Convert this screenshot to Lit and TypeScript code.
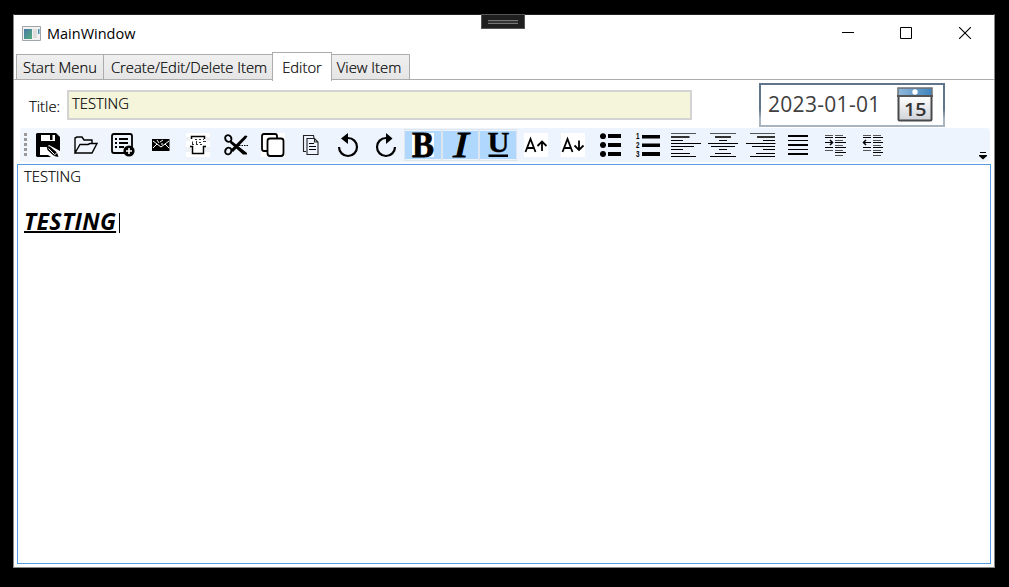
import { LitElement, html, css, svg } from "lit";
import { customElement } from "lit/decorators.js";
import { classMap } from "lit/directives/class-map.js";

type Seg = [number, number, number, number?, string?];
// Horizontal strokes: x start, x end, y, thickness, colour
const bars = (rows: Seg[]) =>
  rows.map(([a, b, y, h = 1, c = "#000"]) => svg`<rect x=${a} y=${y} width=${b - a} height=${h} fill=${c} />`);

const G = "#555";
interface Tool { name: string; w: number; on?: boolean; art: unknown }

const tools: Tool[] = [
  { name: "Save", w: 24, art: svg`
    <path d="M1 0H20L24 4V23L23 24H1L0 23V1Z"/>
    <path fill="#fff" d="M5 2H19V8H5ZM4 14H11L13 12L24 18V24H15L12 22H4Z"/>
    <path d="M14 2H16.500V7H14ZM10.500 13L14 13.500L21 19.500L22.500 24L18 23L11.500 17Z"/>
    <path stroke="#fff" stroke-width="1" fill="none" d="M12.500 15.500L18.500 21.500M18 22.500L21.500 19"/>` },
  { name: "Open", w: 24, art: svg`
    <path fill="none" stroke="#000" stroke-width="1.4" d="M1 20V5L3 4H8L10 7H18V11M1 20L6 11.5H14L16 10.5H23L18 20Z"/>` },
  { name: "New", w: 24, art: svg`
    <path fill="none" stroke="#000" stroke-width="1.8" d="M14 20H3Q1 20 1 18V3Q1 1 3 1H19Q21 1 21 3V14"/>
    ${bars([[4, 6, 5, 2], [8, 17, 5, 2], [4, 6, 9, 2], [8, 17, 9, 2], [4, 6, 13, 2], [8, 13, 13, 2]])}
    <circle cx="18" cy="18" r="5.6"/><path stroke="#fff" stroke-width="1.6" d="M15 18H21M18 15V21"/>` },
  { name: "Mail", w: 24, art: svg`
    <path d="M3 6H20.500V18H3Z"/>
    <path fill="none" stroke="#fff" stroke-width="1" d="M4 8L8 11L4 15M20 8L16 11L20 15M8 11L12 14L16 11M8 7L10 10M11 9L14 7M12 11H14"/>` },
  { name: "Print", w: 24, art: svg`
    <path fill="#fff" d="M0 0H24V24H0Z"/><path fill="#edf1f5" d="M0 4H4V8H0ZM20 4H24V8H20ZM0 14H5V19H0ZM19 14H24V19H19Z"/>
    <path fill="none" stroke="#000" stroke-width="1.500" d="M5.500 6V3.500H18.500V6M6.500 13V20.500H17.500V13M4 13.500H7M17 13.500H20"/>
    <path fill="none" stroke="#333" stroke-width="1" stroke-dasharray="2 2" d="M9 6.500H18M6 11.500H18"/>
    <path fill="none" stroke="#333" stroke-width="1" d="M6.500 8.500V11M10.500 8V11M13 9.500H15M17 8.500H20"/>` },
  { name: "Cut", w: 24, art: svg`
    <g fill="none" stroke="#000" stroke-width="1.900"><ellipse cx="4.300" cy="5.500" rx="3" ry="3.500" transform="rotate(-30 4.300 5.500)"/>
    <ellipse cx="4.300" cy="18" rx="3" ry="3.500" transform="rotate(30 4.300 18)"/></g>
    <path d="M6.500 7L23 20L23 21.500H19L6 10ZM6.500 17L21 2.500L23.500 3L22 5.500L9 19Z"/>
    <path stroke="#000" stroke-width="1" stroke-dasharray="1.500 1" d="M15 12.500H24"/>` },
  { name: "Copy", w: 24, art: svg`
    <path fill="#fff" d="M0 0H24V24H0Z"/>
    <g fill="#fff" stroke="#000" stroke-width="1.800"><path d="M3 1H14Q16 1 16 3V17Q16 18 15 18H3Q1 18 1 16V3Q1 1 3 1Z"/>
    <path d="M9 5.500H20Q22.500 5.500 22.500 8V20Q22.500 23 20 23H9Q6.500 23 6.500 20V8Q6.500 5.500 9 5.500Z"/></g>` },
  { name: "Paste", w: 24, art: svg`
    <path fill="none" stroke="#222" stroke-width="1.100" d="M7 18.500H4.500V2.500H14.500L15 5M8 5.500H15.500L19 9V21.500H8ZM15.500 5.500V9H19"/>
    ${bars([[10, 15, 10], [10, 17, 13, 1], [10, 17, 16]])}` },
  { name: "Undo", w: 24, art: svg`
    <path fill="none" stroke="#000" stroke-width="2.200" d="M3 14A9 9 0 1 0 12 5H10"/><path d="M5 5.500L12 0V11Z"/>` },
  { name: "Redo", w: 24, art: svg`
    <path fill="none" stroke="#000" stroke-width="2.200" d="M21 14A9 9 0 1 1 12 5H14"/><path d="M18.500 5.500L12 0V11Z"/>` },
  { name: "Bold", w: 24, on: true, art: svg`
    <path fill="#fff" d="M1 0H23V24H1Z"/>
    <text class="serif" x="1" y="23.600" font-size="35.500" textLength="22" lengthAdjust="spacingAndGlyphs" stroke="#000" stroke-width=".8">B</text>` },
  { name: "Italic", w: 24, on: true, art: svg`
    <text class="serif slant" x="4" y="23.500" font-size="35.500" textLength="15.500" lengthAdjust="spacingAndGlyphs" stroke="#000" stroke-width=".8">I</text>` },
  { name: "Underline", w: 24, on: true, art: svg`
    <text class="serif" x="1.500" y="19" font-size="29.500" textLength="22" lengthAdjust="spacingAndGlyphs" stroke="#000" stroke-width=".4">U</text>
    <path d="M2.500 21.500H22V24H2.500Z"/>` },
  { name: "Grow", w: 24, art: svg`
    <path fill="#fff" d="M0 0H24V24H0Z"/>
    <path fill="none" stroke="#000" stroke-width="1.800" d="M1.500 19L6.500 6L11.500 19M3.500 15H9.500M18 18V8.500M13.500 13L18 8.500L22.500 13"/>` },
  { name: "Shrink", w: 24, art: svg`
    <path fill="#fff" d="M0 0H24V24H0Z"/>
    <path fill="none" stroke="#000" stroke-width="1.800" d="M1.500 19L6.500 6L11.500 19M3.500 15H9.500M18 7.500V17M13.500 12.500L18 17L22.500 12.500"/>` },
  { name: "Bullets", w: 24, art: svg`
    <circle cx="4" cy="3.200" r="2.900"/><circle cx="4" cy="12" r="2.900"/><circle cx="4" cy="21" r="2.900"/>
    ${bars([[1, 7, 2.400, 1.600], [1, 7, 11.200, 1.600], [1, 7, 20.200, 1.600], [9, 22, 1, 4], [9, 22, 10, 4], [9, 22, 19, 4]])}` },
  { name: "Numbering", w: 24, art: svg`
    ${["1", "2", "3"].map((n, i) => svg`<text class="num" x="0" y=${6 + i * 8.8} textLength="3.500" lengthAdjust="spacingAndGlyphs">${n}</text>`)}
    ${bars([[6, 24, 2, 3.5], [6, 24, 10.5, 3.5], [6, 24, 19, 4]])}` },
  { name: "Left", w: 30, art: bars([[0, 25, 0, 1, G], [0, 18.500, 3, 2, "#333"], [0, 12, 7], [0, 30, 10], [0, 23, 13], [0, 12, 16], [0, 19, 20], [0, 25, 23]]) },
  { name: "Center", w: 30, art: bars([[2, 28, 0, 1, G], [7, 23, 3, 2, "#333"], [11, 19, 7], [0, 30, 10], [3, 27, 13], [11, 19, 16], [7, 23, 20], [2, 28, 23]]) },
  { name: "Right", w: 30, art: bars([[4, 29, 0, 1, G], [11, 29, 3, 2, "#333"], [17, 29, 7], [0, 29.500, 10], [6, 29, 13], [17, 29, 16], [10, 29, 20], [4, 29, 23]]) },
  { name: "Justify", w: 24, art: bars([[2, 22, 2, 2], [2, 22, 7], [2, 22, 11, 2], [2, 22, 16], [2, 22, 20, 2]]) },
  { name: "Indent", w: 24, art: svg`${bars([[1, 9, 2, 1, G], [1, 9, 4], [1, 9, 9], [1, 9, 14], [1, 9, 17, 1, G],
    [11, 19, 2, 1, G], [11, 22, 4], [11, 19, 7, 1, G], [11, 22, 9], [11, 19, 12, 1, G], [11, 22, 14], [11, 19, 17, 1, G], [11, 22, 19], [11, 19, 22, 1, G]])}
    <path fill="none" stroke="#000" stroke-width="1.500" d="M6 7L8.500 9.500L6 12"/>` },
  { name: "Outdent", w: 24, art: svg`${bars([[2, 10, 2, 1, G], [2, 10, 4], [2, 10, 9], [2, 10, 14], [2, 10, 17, 1, G],
    [12, 20, 2, 1, G], [12, 22, 4], [12, 20, 7, 1, G], [12, 22, 9], [12, 20, 12, 1, G], [12, 22, 14], [12, 20, 17, 1, G], [12, 22, 19], [12, 20, 22, 1, G]])}
    <path fill="none" stroke="#000" stroke-width="1.500" d="M5 7L2.500 9.500L5 12"/>` },
];

@customElement("app-root")
export class AppRoot extends LitElement {
  static styles = css`
    :host { display: block; box-sizing: border-box; height: 587px; padding: 14px 14px 19px 13px; background: #000; color: #000; font: 300 14.8px/20px "Open Sans", "Noto Sans", sans-serif; }
    * { box-sizing: border-box; }
    .window { position: relative; height: 554px; border: 1px solid #888; border-top-color: #222; background: #fff; display: flex; flex-direction: column; }
    .grip { position: absolute; left: 467px; top: -1px; width: 44px; height: 15px; background: #1f1f1f; border: 1px solid #555; padding: 5px 6px; }
    .grip i { display: block; height: 4px; border: 1px solid #777; border-width: 1px 0; background: #333; }
    .titlebar { height: 37px; display: flex; align-items: center; padding-left: 8px; }
    .name { margin: 0 auto 0 6px; font-size: 14.5px; font-weight: 400; letter-spacing: 0; }
    .winbtn { width: 12px; height: 12px; margin: -1px 46px 0 0; }
    .winbtn.max { margin-right: 47px; }
    .winbtn:last-child { margin-right: 23px; }
    .tabs { height: 28px; display: flex; align-items: flex-end; padding-left: 2px; border-bottom: 1px solid #acacac; }
    .tab { height: 25px; border: 1px solid #acacac; border-right: 0; border-bottom: 0; background: linear-gradient(#f0f0f0, #e5e5e5); text-align: center; line-height: 25px; white-space: nowrap; }
    .tab, .label, .field, .line { -webkit-text-stroke: .2px #000; }
    .tab.t0 { width: 87px; } .tab.t1 { width: 169px; padding-left: 2px; }
    .tab.t2 { width: 60px; height: 29px; margin-bottom: -2px; line-height: 28px; border-right: 1px solid #acacac; background: #fff; z-index: 1; }
    .tab.t3 { width: 78px; border-left: 0; border-right: 1px solid #acacac; padding-right: 3px; }
    .header { height: 48px; display: flex; align-items: flex-start; padding-left: 15px; }
    .label { width: 38px; padding-top: 16px; }
    .field { margin-top: 10px; width: 625px; height: 30px; border: 2px solid #d3d3d3; background: #f5f5dc; padding: 1px 3px; }
    .date { margin: 3px 0 0 67px; width: 186px; height: 44px; padding: 2px; background: linear-gradient(#60758a 60%, #a8b4c0 80%); }
    .dateinner { height: 100%; background: #fff; display: flex; align-items: center; justify-content: space-between; padding: 0 10px 2px 7px; font-size: 21px; font-weight: 400; color: #404040; letter-spacing: .3px; }
    .toolbar { height: 34px; margin: 0 4px 0 6px; background: linear-gradient(90deg, #f2f6fd, #edf4fd 20%); border-radius: 3px; display: flex; align-items: center; padding-left: 3px; }
    .handle { width: 6.300px; height: 24px; background: linear-gradient(#999 3px, transparent 3px) 1px 0/3px 5px repeat-y; }
    .tool { flex: none; width: 37.500px; height: 32px; display: flex; align-items: center; justify-content: center; }
    .tool.on { background: #b0d8ff content-box; padding: 1px; border: 1px solid #dde6ef; border-width: 1px 0; box-shadow: inset 1px 0 #dde6ef, inset -1px 0 #dde6ef; }
    .tool svg { flex: none; overflow: visible; }
    .more { align-self: flex-end; margin: 0 3px 2px auto; }
    .doc { flex: 1; margin: 2px 3px 3px 3px; border: 1px solid #569de5; padding: 1px 6px; }
    .heading { display: flex; margin-top: 22px; font-size: 23px; line-height: 26px; letter-spacing: .35px; }
    .rich { font-weight: 700; font-style: italic; text-decoration: underline; text-decoration-thickness: 1.500px; text-underline-offset: 1px; text-decoration-skip-ink: none; }
    .caret { width: 1px; height: 20px; margin: 5px 0 0 3px; background: #000; }
    .serif { font-family: "Liberation Serif", serif; font-weight: 700; }
    .slant { font-style: italic; font-weight: 400; }
    .num { font: 700 8.500px "Liberation Sans", sans-serif; }
    .day { font: 600 18px "Open Sans", sans-serif; letter-spacing: 0; }
  `;

  render() {
    const tabs = ["Start Menu", "Create/Edit/Delete Item", "Editor", "View Item"];
    return html`<div class="window">
      <div class="grip"><i></i></div>
      <div class="titlebar">
        <svg width="19" height="15" viewBox="0 0 19 15">
          <defs><linearGradient id="app" x2="1" y2="1"><stop stop-color="#4a78a8"/><stop offset="1" stop-color="#4fae7c"/></linearGradient></defs>
          <path fill="#f2f2f2" stroke="#a0a5aa" d="M.5 .5H18.500V14.500H.5Z"/><path fill="url(#app)" d="M2 3H10V13H2Z"/>
          <path fill="#ddd" d="M11 3H15V12H11Z"/><path fill="#4a91b8" d="M16 3H17.500V8H16Z"/></svg>
        <span class="name">MainWindow</span>
        <svg class="winbtn" viewBox="0 0 12 12"><path d="M0 5H12V6H0Z"/></svg>
        <svg class="winbtn max" viewBox="0 0 12 12"><path fill="none" stroke="#000" d="M.5 .5H11.500V11.500H.5Z"/></svg>
        <svg class="winbtn" viewBox="0 0 12 12"><path stroke="#000" stroke-width="1.100" d="M0 0L12 12M12 0L0 12"/></svg>
      </div>
      <div class="tabs">${tabs.map((t, i) => html`<div class=${classMap({ tab: true, [`t${i}`]: true })}>${t}</div>`)}</div>
      <div class="header">
        <span class="label">Title:</span>
        <div class="field">TESTING</div>
        <div class="date"><div class="dateinner"><span>2023-01-01</span>
          <svg width="36" height="35" viewBox="0 0 36 35">
            <defs><linearGradient id="sky" x2="1"><stop stop-color="#8fb8dc"/><stop offset="1" stop-color="#3f83bd"/></linearGradient>
            <linearGradient id="page" x2="0" y2="1"><stop stop-color="#fff"/><stop offset="1" stop-color="#cfd3d8"/></linearGradient></defs>
            <rect x="1.500" y="9" width="33" height="24.500" rx="1" fill="url(#page)" stroke="#48494b" stroke-width="2"/>
            <rect x="1" y="1" width="34" height="8" fill="url(#sky)" stroke="#707070" stroke-width="1.500"/><path fill="#555" d="M0 8H36V10H0Z"/>
            <circle cx="18" cy="5" r="2.700" fill="#fff"/><text class="day" x="7" y="28.500" fill="#333" textLength="22.500" lengthAdjust="spacingAndGlyphs">15</text></svg>
        </div></div>
      </div>
      <div class="toolbar">
        <div class="handle"></div>
        ${tools.map((t) => html`<div class=${classMap({ tool: true, on: !!t.on })} title=${t.name}>
          <svg width=${t.w} height="24" viewBox="0 0 ${t.w} 24">${t.art}</svg></div>`)}
        <svg class="more" width="8" height="8" viewBox="0 0 8 8"><path d="M1 0H7V1H1ZM0 3H8V4L4 7.500L0 4Z"/></svg>
      </div>
      <div class="doc"><div class="line">TESTING</div><div class="heading"><span class="rich">TESTING</span><span class="caret"></span></div></div>
    </div>`;
  }
}
